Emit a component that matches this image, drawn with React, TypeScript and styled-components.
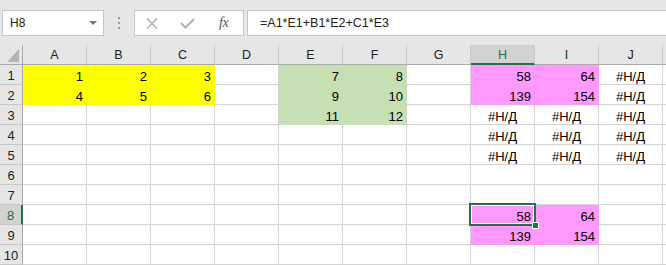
import React from 'react';
import styled, { createGlobalStyle } from 'styled-components';

const GlobalStyle = createGlobalStyle`
  html, body { margin: 0; padding: 0; background: #ffffff; overflow: hidden; }
  * { box-sizing: border-box; }
`;

const GREEN = '#217346';
const YELLOW = '#ffff00';
const LEAF = '#c6e0b4';
const PINK = '#ff99ff';
const NA = '#Н/Д';

const Frame = styled.div`
  width: 666px;
  height: 265px;
  overflow: hidden;
  font-family: 'Liberation Sans', Arial, sans-serif;
  background: #ffffff;
`;

const TopBar = styled.div`
  height: 45px;
  background: #e6e6e6;
  display: flex;
  align-items: flex-start;
  padding: 10px 0 0 2px;
`;

const NameBox = styled.div`
  width: 102px;
  height: 26px;
  background: #ffffff;
  border: 1px solid #c6c6c6;
  display: flex;
  align-items: center;
  justify-content: space-between;
  padding: 0 6px 0 7px;
  font-size: 12px;
  color: #222222;
`;

const DropArrow = styled.span`
  width: 0;
  height: 0;
  border-left: 4px solid transparent;
  border-right: 4px solid transparent;
  border-top: 4px solid #777777;
`;

const Grip = styled.div`
  width: 30px;
  height: 26px;
  display: flex;
  flex-direction: column;
  align-items: center;
  justify-content: center;
  gap: 3px;
`;

const Dot = styled.span`
  width: 2px;
  height: 2px;
  background: #9a9a9a;
`;

const FxBox = styled.div`
  width: 110px;
  height: 26px;
  background: #ffffff;
  border: 1px solid #c6c6c6;
  display: flex;
  align-items: center;
  padding-left: 11px;
  gap: 22px;
`;

const FxLabel = styled.span`
  font-family: 'Liberation Serif', 'Times New Roman', serif;
  font-style: italic;
  font-size: 14px;
  color: #555555;
  margin-left: 2px;
  letter-spacing: -0.5px;
`;

const FormulaBox = styled.div`
  flex: 1;
  height: 26px;
  margin-left: 3px;
  margin-right: -4px;
  background: #ffffff;
  border: 1px solid #c6c6c6;
  display: flex;
  align-items: center;
  padding-left: 12px;
  font-size: 12.5px;
  color: #222222;
`;

const Sheet = styled.div`
  display: grid;
  grid-template-columns: 23px repeat(10, 64px) 1fr;
  grid-template-rows: repeat(11, 20px);
  font-size: 13px;
`;

const Corner = styled.div`
  background: #e6e6e6;
  border-right: 1px solid #ababab;
  border-bottom: 1px solid #ababab;
  display: flex;
  align-items: flex-end;
  justify-content: flex-end;
  padding: 0 3px 2px 0;
`;

const ColHeader = styled.div<{ $selected?: boolean }>`
  background: ${(p) => (p.$selected ? '#d2d2d2' : '#e6e6e6')};
  border-right: 1px solid #c8c8c8;
  border-bottom: ${(p) => (p.$selected ? `2px solid ${GREEN}` : '1px solid #ababab')};
  color: ${(p) => (p.$selected ? GREEN : '#222222')};
  display: flex;
  align-items: flex-end;
  justify-content: center;
  padding-bottom: ${(p) => (p.$selected ? '2px' : '3px')};
  font-size: 12.5px;
  line-height: 1;
`;

const RowHeader = styled.div<{ $selected?: boolean }>`
  background: ${(p) => (p.$selected ? '#d2d2d2' : '#e6e6e6')};
  border-right: ${(p) => (p.$selected ? `2px solid ${GREEN}` : '1px solid #ababab')};
  border-bottom: 1px solid #c8c8c8;
  color: ${(p) => (p.$selected ? GREEN : '#222222')};
  display: flex;
  align-items: flex-end;
  justify-content: center;
  padding-bottom: 2px;
  font-size: 13px;
  line-height: 1;
`;

const Cell = styled.div<{ $fill?: string; $align?: 'right' | 'center'; $active?: boolean }>`
  position: relative;
  z-index: ${(p) => (p.$active ? 2 : 'auto')};
  background: ${(p) => p.$fill || '#ffffff'};
  border-right: 1px solid ${(p) => p.$fill || '#d4d4d4'};
  border-bottom: 1px solid ${(p) => p.$fill || '#d4d4d4'};
  display: flex;
  align-items: flex-end;
  justify-content: ${(p) => (p.$align === 'center' ? 'center' : 'flex-end')};
  padding: 0 3px 1px 3px;
  line-height: 1;
  color: #000000;
  white-space: nowrap;
`;

const Filler = styled.div<{ $header?: boolean }>`
  background: ${(p) => (p.$header ? '#e6e6e6' : '#ffffff')};
  border-bottom: 1px solid ${(p) => (p.$header ? '#ababab' : '#d4d4d4')};
`;

const Selection = styled.div`
  position: absolute;
  top: -2px;
  left: -2px;
  right: -2px;
  bottom: -2px;
  border: 2px solid ${GREEN};
  box-shadow: inset 0 0 0 1px #ffffff;
  pointer-events: none;
`;

const FillHandle = styled.div`
  position: absolute;
  right: -5px;
  bottom: -5px;
  width: 7px;
  height: 7px;
  background: ${GREEN};
  border: 1px solid #ffffff;
`;

type CellData = { v?: string; fill?: string };

const empty = (): CellData[] => Array.from({ length: 10 }, () => ({}));
const rows: CellData[][] = Array.from({ length: 10 }, empty);

const set = (r: number, c: number, v?: string, fill?: string) => {
  rows[r][c] = { v, fill };
};

set(0, 0, '1', YELLOW); set(0, 1, '2', YELLOW); set(0, 2, '3', YELLOW);
set(1, 0, '4', YELLOW); set(1, 1, '5', YELLOW); set(1, 2, '6', YELLOW);
set(0, 4, '7', LEAF); set(0, 5, '8', LEAF);
set(1, 4, '9', LEAF); set(1, 5, '10', LEAF);
set(2, 4, '11', LEAF); set(2, 5, '12', LEAF);
set(0, 7, '58', PINK); set(0, 8, '64', PINK); set(0, 9, NA);
set(1, 7, '139', PINK); set(1, 8, '154', PINK); set(1, 9, NA);
for (let r = 2; r < 5; r++) { set(r, 7, NA); set(r, 8, NA); set(r, 9, NA); }
set(7, 7, '58', PINK); set(7, 8, '64', PINK);
set(8, 7, '139', PINK); set(8, 8, '154', PINK);

const COLS = ['A', 'B', 'C', 'D', 'E', 'F', 'G', 'H', 'I', 'J'];
const SEL_ROW = 7;
const SEL_COL = 7;

const CancelIcon = () => (
  <svg width="12" height="11" viewBox="0 0 12 11">
    <path d="M1 0.5 L11 10.5 M11 0.5 L1 10.5" stroke="#b3b3b3" strokeWidth="1.6" fill="none" />
  </svg>
);

const CheckIcon = () => (
  <svg width="15" height="11" viewBox="0 0 15 11">
    <path d="M1 5 L5.5 9.5 L14 1" stroke="#b3b3b3" strokeWidth="2.2" fill="none" />
  </svg>
);

const CornerTriangle = () => (
  <svg width="12" height="13" viewBox="0 0 12 13">
    <path d="M12 0 L12 13 L0 13 Z" fill="#b4b4b4" />
  </svg>
);

export default function App() {
  return (
    <Frame>
      <GlobalStyle />
      <TopBar>
        <NameBox>
          <span>H8</span>
          <DropArrow />
        </NameBox>
        <Grip>
          <Dot />
          <Dot />
          <Dot />
        </Grip>
        <FxBox>
          <CancelIcon />
          <CheckIcon />
          <FxLabel>fx</FxLabel>
        </FxBox>
        <FormulaBox>=A1*E1+B1*E2+C1*E3</FormulaBox>
      </TopBar>
      <Sheet>
        <Corner>
          <CornerTriangle />
        </Corner>
        {COLS.map((c, i) => (
          <ColHeader key={c} $selected={i === SEL_COL}>
            {c}
          </ColHeader>
        ))}
        <Filler $header />
        {rows.map((row, r) => {
          return (
            <React.Fragment key={r}>
              <RowHeader $selected={r === SEL_ROW}>{r + 1}</RowHeader>
              {row.map((cell, c) => {
                const active = r === SEL_ROW && c === SEL_COL;
                return (
                  <Cell
                    key={c}
                    $fill={cell.fill}
                    $active={active}
                    $align={cell.v === NA ? 'center' : 'right'}
                  >
                    {cell.v}
                    {active && (
                      <Selection>
                        <FillHandle />
                      </Selection>
                    )}
                  </Cell>
                );
              })}
              <Filler />
            </React.Fragment>
          );
        })}
      </Sheet>
    </Frame>
  );
}
